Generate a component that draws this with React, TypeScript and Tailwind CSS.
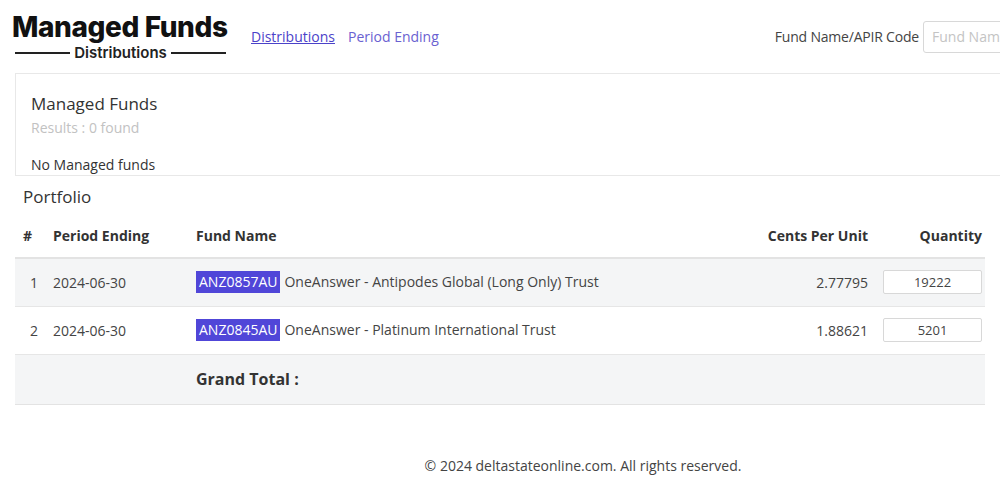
import React from "react";

interface FundRow {
  id: number;
  period_ending: string;
  apir: string;
  fund_name: string;
  cents_per_unit: string;
  quantity: string;
}

const rows: FundRow[] = [
  {
    id: 1,
    period_ending: "2024-06-30",
    apir: "ANZ0857AU",
    fund_name: "OneAnswer - Antipodes Global (Long Only) Trust",
    cents_per_unit: "2.77795",
    quantity: "19222",
  },
  {
    id: 2,
    period_ending: "2024-06-30",
    apir: "ANZ0845AU",
    fund_name: "OneAnswer - Platinum International Trust",
    cents_per_unit: "1.88621",
    quantity: "5201",
  },
];

const App: React.FC = () => {
  return (
    <div className="w-full overflow-hidden bg-white">
      <div className="w-[1166px] text-[#212529] font-['Open_Sans',sans-serif] text-[14px]">
        {/* Header */}
        <div className="flex items-center h-[73px] pl-[12px]">
          <div className="flex flex-col w-[214px] mt-[-1px]">
            <div className="whitespace-nowrap font-['Inter',sans-serif] font-extrabold text-[28px] leading-[30px] tracking-[-0.4px] text-[#111]">
              Managed Funds
            </div>
            <div className="flex items-center gap-[4px] pl-[3px] mt-[3px]">
              <div className="flex-1 h-[2px] bg-[#222]"></div>
              <div className="font-['Inter',sans-serif] font-semibold text-[15px] leading-[16px] text-[#222]">
                Distributions
              </div>
              <div className="flex-1 h-[2px] bg-[#222]"></div>
            </div>
          </div>
          <nav className="flex items-center gap-[13px] ml-[25px]">
            <a href="#" className="underline text-[#4b42c9]">Distributions</a>
            <a href="#" className="text-[#6a61d1]">Period Ending</a>
          </nav>
          <div className="flex items-center ml-auto mr-[3px]">
            <span className="text-[#444] mr-[4px] tracking-[-0.2px]">Fund Name/APIR Code</span>
            <input
              type="text"
              placeholder="Fund Name/APIR Code"
              className="w-[240px] h-[32px] border border-[#d8d8d8] rounded-[3px] px-[8px] placeholder:text-[#c4c4c4] outline-none"
            />
          </div>
        </div>

        {/* Managed funds card */}
        <div className="mx-[15px] border border-[#e8e8e8] h-[103px] overflow-hidden px-[15px] pt-[19px]">
          <h2 className="text-[17px] leading-[22px] text-[#333]">Managed Funds</h2>
          <p className="text-[#c2c2c2] mt-[2px]">Results : 0 found</p>
          <p className="mt-[16px] text-[#333]">No Managed funds</p>
        </div>

        {/* Portfolio */}
        <div className="mx-[15px]">
          <h3 className="text-[17px] text-[#333] pl-[8px] mt-[9px] leading-[24px]">Portfolio</h3>
          <table className="w-[970px] mt-[14px] border-collapse">
            <thead>
              <tr className="border-b-2 border-[#e3e3e3] h-[35px]">
                <th className="text-left font-bold text-[#333] pl-[8px] pb-[9px] w-[38px]">#</th>
                <th className="text-left font-bold text-[#333] pb-[9px] w-[143px]">Period Ending</th>
                <th className="text-left font-bold text-[#333] pb-[9px]">Fund Name</th>
                <th className="text-right font-bold text-[#333] pb-[9px] w-[200px]">Cents Per Unit</th>
                <th className="text-right font-bold text-[#333] pb-[9px] w-[117px] pr-[3px]">Quantity</th>
              </tr>
            </thead>
            <tbody>
              {rows.map((row, i) => (
                <tr
                  key={row.id}
                  className={
                    "h-[48px] border-b border-[#e6e6e6] " + (i % 2 === 0 ? "bg-[#f4f5f6]" : "bg-white")
                  }
                >
                  <td className="text-[#444] pl-[15px]">{row.id}</td>
                  <td className="text-[#444]">{row.period_ending}</td>
                  <td className="text-[#444]">
                    <span className="inline-block bg-[#5046d8] text-white px-[3px] leading-[22px] mr-[4px]">
                      {row.apir}
                    </span>
                    {row.fund_name}
                  </td>
                  <td className="text-right text-[#444]">{row.cents_per_unit}</td>
                  <td className="text-right">
                    <input
                      type="text"
                      defaultValue={row.quantity}
                      className="w-[99px] h-[24px] border border-[#d8d8d8] rounded-[2px] bg-white text-center text-[13px] text-[#444] ml-auto block outline-none mr-[3px]"
                    />
                  </td>
                </tr>
              ))}
              <tr className="h-[50px] bg-[#f4f5f6] border-b border-[#e3e3e3]">
                <td></td>
                <td></td>
                <td className="font-bold text-[16px] text-[#333]">Grand Total :</td>
                <td></td>
                <td></td>
              </tr>
            </tbody>
          </table>
        </div>

        {/* Footer */}
        <footer className="text-center text-[#444] mt-[50px]">
          © 2024 deltastateonline.com. All rights reserved.
        </footer>
      </div>
    </div>
  );
};

export default App;
